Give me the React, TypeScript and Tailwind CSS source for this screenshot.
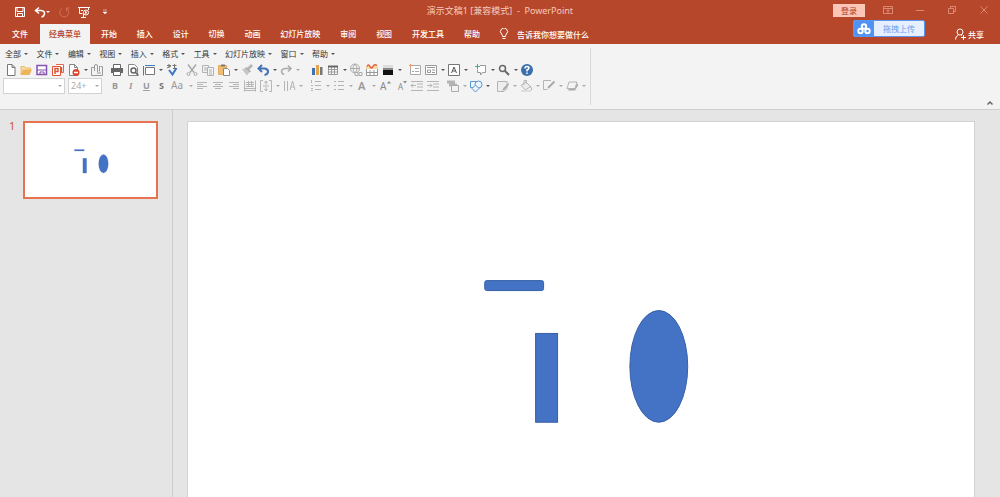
import type { ReactNode } from "react";

const tabs = ["文件", "经典菜单", "开始", "插入", "设计", "切换", "动画", "幻灯片放映", "审阅", "视图", "开发工具", "帮助"];

const menus = ["全部", "文件", "编辑", "视图", "插入", "格式", "工具", "幻灯片放映", "窗口", "帮助"];

type Tool = { name: string; icon?: ReactNode; menu?: boolean; muted?: boolean };

const page = <path d="M5.500 2.500h4.500l3 3v8h-7.500zM10 2.500v3h3" fill="#fff" stroke="#777" />;
const gap: Tool = { name: "" };

const mainTools: Tool[] = [
  { name: "新建", icon: page },
  {
    name: "打开",
    icon: (
      <>
        <path d="M3 12.500v-8h3.500l1 1.500h5v2" fill="#f8dca6" stroke="#e9ba6c" />
        <path d="M2.500 13l2.500-5.500h9l-2.500 5.500z" fill="#edb45c" />
      </>
    ),
  },
  {
    name: "保存",
    icon: (
      <>
        <path d="M3 3.500h9.500v9h-9.500z" fill="#fff" stroke="#8650b0" strokeWidth="1.500" />
        <path d="M3 7.500h9.500v1h-9.500z" fill="#8650b0" />
        <path d="M6 13v-3h4v3" fill="none" stroke="#8650b0" />
      </>
    ),
  },
  {
    name: "关闭演示文稿",
    icon: (
      <>
        <path d="M6 2.500h7.500v8h-7.500" fill="#fff" stroke="#dc6a4d" />
        <path d="M2.500 4.500h8v9h-8z" fill="#fff" stroke="#dc5637" />
        <path d="M5 12v-5.500h3v3h-3M11.500 5v5" fill="none" stroke="#dc5637" strokeWidth="1.500" />
      </>
    ),
  },
  {
    name: "权限",
    menu: true,
    icon: (
      <>
        <path d="M3.500 2.500h5l3 3v8h-8zM8.500 2.500v3h3" fill="#fff" stroke="#888" />
        <circle cx="10" cy="10.500" r="3.500" fill="#d9482b" />
        <path d="M8 10.500h4" stroke="#fff" strokeWidth="1.500" />
      </>
    ),
  },
  {
    name: "附件",
    icon: (
      <>
        <path d="M5 5.500h-2.500v8h11v-9h-2" fill="none" stroke="#999" />
        <path d="M5.500 9v-5q0-1.500 1.500-1.500t1.500 1.500v6M10.500 4v5.500M8 11h4" fill="none" stroke="#999" />
      </>
    ),
  },
  gap,
  {
    name: "打印",
    icon: (
      <>
        <path d="M4.500 6v-3.500h7v3.500" fill="#fff" stroke="#666" />
        <path d="M2 6h12v5h-12z" fill="#666" />
        <path d="M4.500 9.500h7v4h-7z" fill="#fff" stroke="#666" />
      </>
    ),
  },
  {
    name: "打印预览",
    icon: (
      <>
        <path d="M3.500 2.500h6l3 3v8h-9z" fill="#fff" stroke="#888" />
        <circle cx="8.500" cy="8.500" r="2.500" fill="none" stroke="#666" strokeWidth="1.500" />
        <path d="M10.500 10.500l3 3" stroke="#666" strokeWidth="1.500" />
      </>
    ),
  },
  {
    name: "幻灯片大小",
    menu: true,
    icon: (
      <>
        <path d="M4.500 5.500h9v7h-9z" fill="#fff" stroke="#777" />
        <path d="M4 3.500h10M2.500 4v9.500" stroke="#3c7fc4" />
      </>
    ),
  },
  {
    name: "拼写检查",
    icon: (
      <>
        <path d="M3 3.500h4M5 2v4M3 6l4-2M8.500 3.500h4M10.500 2v4M9 6.500h3" fill="none" stroke="#777" />
        <path d="M5 8l3.500 4.500 4-6.500" fill="none" stroke="#3c74c4" strokeWidth="2" />
      </>
    ),
  },
  gap,
  {
    name: "剪切",
    icon: (
      <g fill="none" stroke="#aaa">
        <path d="M4 2.500l6 8M12 2.500l-6 8" strokeWidth="1.500" />
        <circle cx="4.500" cy="12" r="1.500" />
        <circle cx="11.500" cy="12" r="1.500" />
      </g>
    ),
  },
  {
    name: "复制",
    icon: (
      <g fill="#f3f3f3" stroke="#b2b2b2">
        <path d="M2.500 3.500h6v7h-6zM4 6h3M4 8h3" />
        <path d="M7.500 5.500h6v8h-6zM9 8h3M9 10h3M9 12h3" />
      </g>
    ),
  },
  {
    name: "粘贴",
    menu: true,
    icon: (
      <>
        <path d="M2.500 3.500h8v9h-8z" fill="#efbd72" stroke="#e3ac5c" />
        <path d="M5 2.500h4v2h-4z" fill="#777" />
        <path d="M7.500 6.500h4l2 2v5h-6z" fill="#fff" stroke="#888" />
      </>
    ),
  },
  {
    name: "格式刷",
    icon: (
      <>
        <path d="M12 2l2 2-4 4-2-2z" fill="#b5b5b5" />
        <path d="M3 7.500l4-2 4 4-3 4z" fill="#c6c6c6" />
        <path d="M7 5.500l4.500 4.500" stroke="#aaa" strokeWidth="1.500" />
      </>
    ),
  },
  { name: "撤消", menu: true, icon: <path d="M7 3L3.500 6.500l3.500 3.500M4 6.500h6q3.500 1 3 3.500t-3.500 3" fill="none" stroke="#4472b8" strokeWidth="2" /> },
  { name: "恢复", menu: true, muted: true, icon: <path d="M10 3.500l3 3-3 3M12.500 6.500h-6q-3 1-3 3t2.500 3" fill="none" stroke="#aaa" strokeWidth="1.500" /> },
  gap,
  gap,
  {
    name: "图表",
    icon: (
      <>
        <path d="M3 6h3v7h-3z" fill="#3f74b0" />
        <path d="M7 3h3v10h-3z" fill="#e7a54b" />
        <path d="M11 5h2.500v8h-2.500z" fill="#777" />
      </>
    ),
  },
  {
    name: "表格",
    menu: true,
    icon: (
      <>
        <path d="M3.500 4.500h9v8h-9zM6.500 4v9M9.500 4v9M3 7.500h9M3 10h9" fill="#fff" stroke="#999" />
        <path d="M3 3.500h10v2h-10z" fill="#666" />
      </>
    ),
  },
  {
    name: "超链接",
    icon: (
      <g fill="none" stroke="#aaa">
        <circle cx="7" cy="6.500" r="4.500" />
        <path d="M2.500 6.500h9M7 2q-4 4.500 0 9q4-4.500 0-9" />
        <path d="M7 10.500h3v3h-3zM11 10.500h3v3h-3z" fill="#f3f3f3" />
      </g>
    ),
  },
  {
    name: "日期",
    icon: (
      <>
        <path d="M2.500 4.500h11v9h-11zM6 8v5M10 8v5M3 10.500h10" fill="#fff" stroke="#999" />
        <path d="M2 4h12v3h-12z" fill="#f4d9a8" />
        <path d="M3 4.500q1.500-3 3 0t3 0 4-1" fill="none" stroke="#e0603f" strokeWidth="1.500" />
      </>
    ),
  },
  {
    name: "颜色",
    menu: true,
    icon: (
      <>
        <path d="M3 3h10v3h-10z" fill="#ddd" />
        <path d="M3 6h10v2h-10z" fill="#888" />
        <path d="M3 8h10v5h-10z" fill="#111" />
      </>
    ),
  },
  gap,
  {
    name: "新建幻灯片",
    icon: (
      <>
        <path d="M3.500 3.500h10v9h-10zM8 6.500h4M8 9.500h4M5 9.500h2" fill="#fff" stroke="#aaa" />
        <path d="M3.500 2v4M2 3.500h4" stroke="#e9986c" />
      </>
    ),
  },
  { name: "版式", menu: true, icon: <path d="M2.500 3.500h11v9h-11zM4 5.500h8M4.500 8h3v2.500h-3zM9 8h3M9 10.500h3" fill="#fff" stroke="#999" /> },
  {
    name: "文本框",
    menu: true,
    icon: (
      <>
        <path d="M2.500 2.500h11v11h-11z" fill="#fff" stroke="#777" />
        <path d="M5.500 11l2.500-6 2.500 6M6.500 9h3" fill="none" stroke="#555" />
      </>
    ),
  },
  gap,
  {
    name: "批注",
    menu: true,
    icon: (
      <>
        <path d="M7 3.500h5.500v7h-3l-2 2.500v-2.500h-3v-3" fill="#fff" stroke="#999" />
        <path d="M4.500 2v5M2 4.500h5" stroke="#55a878" />
      </>
    ),
  },
  {
    name: "查找",
    menu: true,
    icon: (
      <g fill="none" stroke="#666">
        <circle cx="6.500" cy="6.500" r="3" strokeWidth="1.500" />
        <path d="M9 9l4 4" strokeWidth="2" />
      </g>
    ),
  },
  {
    name: "帮助",
    icon: (
      <>
        <circle cx="8" cy="8" r="6" fill="#3a6faa" />
        <path d="M6 6.500q0-2 2-2t2 1.500q0 1-2 2v1.500M8 10.500v1.500" fill="none" stroke="#fff" strokeWidth="1.500" />
      </>
    ),
  },
];

const lines = (d: string) => <path d={d} fill="none" stroke="#b5b5b5" />;

const formatTools: Tool[] = [
  { name: "加粗", icon: <text x="5" y="11" fontSize="9" fontWeight="700" fill="#999">B</text> },
  { name: "倾斜", icon: <text x="6" y="11" fontSize="9" fontStyle="italic" fontWeight="700" fontFamily="Liberation Serif" fill="#999">I</text> },
  { name: "下划线", icon: <text x="4" y="11" fontSize="9" fontWeight="700" textDecoration="underline" fill="#999">U</text> },
  { name: "阴影", icon: <text x="4" y="11" fontSize="9" fontWeight="700" fill="#777">S</text> },
  { name: "更改大小写", menu: true, muted: true, icon: <text x="0" y="11" fontSize="10" fill="#999">Aa</text> },
  { name: "左对齐", icon: lines("M3 4.500h10M3 6.500h6M3 8.500h10M3 10.500h6") },
  { name: "居中", icon: lines("M3 4.500h10M5 6.500h6M3 8.500h10M5 10.500h6") },
  { name: "右对齐", icon: lines("M3 4.500h10M7 6.500h6M3 8.500h10M7 10.500h6") },
  { name: "分散对齐", icon: lines("M2.500 2.500v11M13.500 2.500v11M4 4.500h8M4 6.500h8M4 8.500h8M3 12.500h10M3 10.500h10M6.500 3v6M9.500 3v6") },
  { name: "对齐文本", menu: true, muted: true, icon: lines("M5 2.500h-2.500v11h2.500M11 2.500h2.500v11h-2.500M8 3v4M8 9v4M6.500 5l1.500-2 1.500 2M6.500 11l1.500 2 1.500-2M5 8h6") },
  { name: "文字方向", menu: true, muted: true, icon: lines("M3.500 3v10M6.500 3v10M9 12l2.500-9 2.500 9M10 9h3") },
  gap,
  { name: "编号", menu: true, muted: true, icon: lines("M7 3.500h6M7 7.500h6M7 11.500h6M3.500 2v3M3 7.500h2M3 10.500h2M3 12.500h2") },
  { name: "项目符号", menu: true, muted: true, icon: lines("M7 3.500h6M7 7.500h6M7 11.500h6M3 3.500h2M3 7.500h2M3 11.500h2") },
  { name: "字体颜色", menu: true, muted: true, icon: <text x="4" y="12" fontSize="11" fontWeight="600" fill="#999">A</text> },
  {
    name: "增大字号",
    icon: (
      <>
        <text x="3" y="12" fontSize="10" fill="#888">A</text>
        <path d="M10 5.500l2-2.500 2 2.500z" fill="#888" />
      </>
    ),
  },
  {
    name: "减小字号",
    icon: (
      <>
        <text x="5" y="12" fontSize="8" fill="#888">A</text>
        <path d="M10 3l2 2.500 2-2.500z" fill="#888" />
      </>
    ),
  },
  { name: "减少缩进", icon: lines("M2 3.500h12M8 6h6M8 9h6M2 12.500h12M7 7.500h-5M4 5.500l-2 2 2 2") },
  { name: "增加缩进", icon: lines("M2 3.500h12M8 6h6M8 9h6M2 12.500h12M2 7.500h5M5 5.500l2 2-2 2") },
  gap,
  {
    name: "排列",
    menu: true,
    muted: true,
    icon: (
      <>
        <path d="M2 2.500h8v3h-8zM4 5.500h8v3h-8z" fill="#b5b5b5" />
        <path d="M6.500 7.500h7v6h-7z" fill="#f3f3f3" stroke="#aaa" />
      </>
    ),
  },
  {
    name: "形状",
    menu: true,
    icon: (
      <g fill="#eef5fc" stroke="#5a96cc">
        <path d="M2.500 3.500h7v6h-7z" />
        <circle cx="10.500" cy="6.500" r="3.500" />
        <path d="M7.500 7l3.500 3.500-3.500 3.500-3.500-3.500z" />
      </g>
    ),
  },
  gap,
  {
    name: "快速样式",
    menu: true,
    muted: true,
    icon: (
      <>
        <path d="M2.500 3.500h9.500v7l-3 3h-6.500z" fill="#eee" stroke="#b5b5b5" />
        <path d="M13.500 5l-5 5-1.500 3 3-1.500 4-5z" fill="#aaa" />
      </>
    ),
  },
  {
    name: "形状填充",
    menu: true,
    muted: true,
    icon: (
      <>
        <path d="M3 7.500l5-3.500 4.500 4.500-5 3.500zM6 7v-4.500h2.500v3" fill="#ececec" stroke="#b5b5b5" />
        <path d="M12 8q3 3 1 4.500" stroke="#aaa" fill="none" />
        <path d="M3 13h10" stroke="#ddd" strokeWidth="2" />
      </>
    ),
  },
  {
    name: "形状轮廓",
    menu: true,
    muted: true,
    icon: (
      <>
        <path d="M10 2.500h-7.500v9h4" fill="none" stroke="#b5b5b5" />
        <path d="M13.500 3.500l-6.500 6.500" stroke="#aaa" strokeWidth="2" />
      </>
    ),
  },
  {
    name: "形状效果",
    menu: true,
    muted: true,
    icon: (
      <>
        <path d="M4 12.500h7l3-5v-2l-9 5z" fill="#aaa" />
        <path d="M5 4h8l-2 6.500h-8z" fill="#f3f3f3" stroke="#b5b5b5" />
      </>
    ),
  },
];

function Caret({ muted }: { muted?: boolean }) {
  return (
    <svg viewBox="0 0 4 2" className={muted ? "h-[2px] w-1 text-[#aaa]" : "h-[2px] w-1 text-[#555]"}>
      <path d="M0 0h4l-2 2z" fill="currentColor" />
    </svg>
  );
}

function ToolRow({ tools }: { tools: Tool[] }) {
  return (
    <>
      {tools.map((tool, i) =>
        tool.icon ? (
          <button
            key={i}
            type="button"
            aria-label={tool.name}
            className={tool.menu ? "flex h-4 w-[23px] shrink-0 items-center gap-[2px]" : "flex h-4 w-4 shrink-0 items-center"}
          >
            <svg viewBox="0 0 16 16" className="h-4 w-4 shrink-0">
              {tool.icon}
            </svg>
            {tool.menu && <Caret muted={tool.muted} />}
          </button>
        ) : (
          <span key={i} className="w-1 shrink-0" />
        )
      )}
    </>
  );
}

function SlideArt() {
  return (
    <svg viewBox="0 0 788 443" className="block w-full" role="img" aria-label="幻灯片 1">
      <g fill="#4472c4" stroke="#3560a8">
        <rect x="297.500" y="159" width="59" height="10" rx="2" />
        <rect x="348.500" y="212" width="22" height="89" />
        <ellipse cx="472" cy="245" rx="29" ry="56" />
      </g>
    </svg>
  );
}

function TitleBar() {
  return (
    <div className="grid h-6 grid-cols-3 text-white">
      <div className="flex items-center gap-2 pl-[14px]">
        <button type="button" aria-label="保存">
          <svg viewBox="0 0 12 12" className="h-3 w-3" fill="none" stroke="currentColor">
            <path d="M1.500 1.500h9v9h-9zM3 2v3.500h6v-3.500M3.500 10.500v-3h5v3" />
          </svg>
        </button>
        <button type="button" aria-label="撤消" className="flex items-center">
          <svg viewBox="0 0 12 12" className="h-3 w-3" fill="none" stroke="currentColor" strokeWidth="1.500">
            <path d="M5 1.500l-3.500 3 3.500 3M2 4.500h5q4 .500 3.500 3.500-.500 2.500-3 3" />
          </svg>
          <svg viewBox="0 0 4 2" className="h-[2px] w-1">
            <path d="M0 0h4l-2 2z" fill="currentColor" />
          </svg>
        </button>
        <button type="button" aria-label="重复" className="text-[#d0705a]">
          <svg viewBox="0 0 12 12" className="h-3 w-3" fill="none" stroke="currentColor">
            <path d="M4 2.500a4.500 4.500 0 1 0 4.500 0M8.500 5v-3h3" />
          </svg>
        </button>
        <button type="button" aria-label="从头开始放映">
          <svg viewBox="0 0 12 12" className="h-3 w-3" fill="none" stroke="currentColor">
            <path d="M0 1.500h12M1.500 2v5.500h3M10.500 2v2M3 11.500h5M5.500 8v3M3 4.500h2" />
            <circle cx="8" cy="6.500" r="2.500" />
            <path d="M7.500 5.500l1.500 1-1.500 1z" />
          </svg>
        </button>
        <button type="button" aria-label="自定义快速访问工具栏" className="pl-1">
          <svg viewBox="0 0 6 6" className="h-[6px] w-[6px]">
            <path d="M1 1h4M1 3h4l-2 2z" fill="currentColor" stroke="currentColor" strokeWidth="0.500" />
          </svg>
        </button>
      </div>
      <h1 className="pt-[5px] text-center text-[9px] leading-3 whitespace-nowrap text-[#f4cabe]">演示文稿1 [兼容模式]&nbsp; - &nbsp;PowerPoint</h1>
      <div className="flex items-start justify-end gap-[17px] pt-1 pr-[10px] text-[#dc8a76]">
        <button type="button" className="h-[13px] w-8 bg-[#fbc6b7] text-[8px] leading-3 text-[#a83c20]">
          登录
        </button>
        <div className="flex gap-5">
          {[
            { name: "功能区显示选项", d: "M1.500 2.500h9v7h-9zM1.500 4.500h9M6 9v-3M4.500 7l1.500-1.500 1.500 1.500" },
            { name: "最小化", d: "M2 6.500h8" },
            { name: "还原", d: "M2.500 4.500h5v5h-5zM4.500 4.500v-2h5v5h-2" },
            { name: "关闭", d: "M2.500 2.500l7 7M9.500 2.500l-7 7" },
          ].map((item) => (
            <button key={item.name} type="button" aria-label={item.name}>
              <svg viewBox="0 0 12 12" className="h-3 w-3" fill="none" stroke="currentColor">
                <path d={item.d} />
              </svg>
            </button>
          ))}
        </div>
      </div>
    </div>
  );
}

function TabBar() {
  return (
    <div className="flex h-5 items-stretch pl-[3px] text-[8px] leading-[19px] font-medium text-white">
      <a href="#" className="mr-[4px] pl-[9px]">
        {tabs[0]}
      </a>
      <nav className="ml-[8px] flex w-[449px] shrink-0 justify-between">
        {tabs.slice(1).map((tab) => (
          <a key={tab} href="#" className={tab === "经典菜单" ? "bg-[#f3f3f3] px-[9px] text-[#b7472a]" : "px-[9px]"}>
            {tab}
          </a>
        ))}
      </nav>
      <button type="button" className="flex items-center gap-2 pl-[10px]">
        <svg viewBox="0 0 10 12" className="h-3 w-[10px]" fill="none" stroke="currentColor">
          <path d="M3.500 8.500q0-1.500-1-2.500a3.500 3.500 0 1 1 5 0q-1 1-1 2.500zM3.500 10.500h3" />
        </svg>
        告诉我你想要做什么
      </button>
      <button type="button" className="mr-4 ml-auto flex items-center">
        <svg viewBox="0 0 12 12" className="h-3 w-3" fill="none" stroke="currentColor">
          <circle cx="6" cy="4" r="3" />
          <path d="M1.500 11.500q0-3.500 3-4.500M7 7l1 .500M9.500 7v5M7 9.500h5" />
        </svg>
        <span className="pl-[2px]">共享</span>
      </button>
    </div>
  );
}

function UploadBadge() {
  return (
    <button type="button" className="absolute top-[20px] right-[75px] flex h-[17px] w-[72px] overflow-hidden rounded-[2px] border border-[#5b97ee] bg-[#e6effd]">
      <span className="flex h-full w-5 items-center justify-center bg-[#4f93f5]">
        <svg viewBox="0 0 14 12" className="h-3 w-[14px]" fill="none" stroke="#fff" strokeWidth="2">
          <circle cx="7" cy="3.500" r="2.200" />
          <circle cx="3.500" cy="8" r="2.200" />
          <circle cx="10.500" cy="8" r="2.200" />
        </svg>
      </span>
      <span className="flex-1 text-center text-[8px] leading-[15px] text-[#6ba0ee]">拖拽上传</span>
    </button>
  );
}

function Ribbon() {
  return (
    <div className="flex h-[66px] shrink-0 border-b border-[#cfcfcf] bg-[#f3f3f3]">
      <div className="my-1 w-[591px] shrink-0 border-r border-[#d8d8d8]">
        <div className="flex h-[14px] w-[335px] items-start justify-between pl-[5px] text-[8px] leading-3 text-[#333]">
          {menus.map((menu) => (
            <button key={menu} type="button" className="flex items-center gap-[3px]">
              {menu}
              <Caret />
            </button>
          ))}
        </div>
        <div className="flex h-4 pl-[2px]">
          <ToolRow tools={mainTools} />
        </div>
        <div className="flex h-4 items-center pl-[3px]">
          <label className="relative mr-[3px] flex h-4 w-[62px] shrink-0 items-center justify-end border border-[#d2d2d2] bg-white pr-[2px]">
            <select aria-label="字体" className="absolute inset-0 appearance-none text-[8px]" />
            <Caret muted />
          </label>
          <label className="relative mr-[5px] flex h-4 w-[34px] shrink-0 items-center justify-end border border-[#d2d2d2] bg-white pr-[2px]">
            <select aria-label="字号" className="absolute inset-0 appearance-none pl-[2px] text-[9px] text-[#aaa]">
              <option>24+</option>
            </select>
            <Caret muted />
          </label>
          <ToolRow tools={formatTools} />
        </div>
      </div>
      <button type="button" aria-label="折叠功能区" className="mr-[6px] mb-[2px] ml-auto self-end">
        <svg viewBox="0 0 8 8" className="h-2 w-2" fill="none" stroke="#666" strokeWidth="1.500">
          <path d="M1.500 5.500l2.500-2.500 2.500 2.500" />
        </svg>
      </button>
    </div>
  );
}

export default function App() {
  return (
    <div className="relative flex h-screen flex-col overflow-hidden bg-[#e5e5e5] font-['Noto_Sans','Noto_Sans_CJK_SC',sans-serif]">
      <header className="shrink-0 bg-[#b7472a]">
        <TitleBar />
        <TabBar />
        <UploadBadge />
      </header>
      <Ribbon />
      <main className="flex min-h-0 flex-1">
        <aside className="flex w-[173px] shrink-0 items-start border-r border-[#cdcdcd] pt-[11px] pl-[9px]">
          <span className="w-[14px] text-[11px] leading-[10px] text-[#cf5233]">1</span>
          <a href="#" className="block w-[135px] border-2 border-[#e8714f] bg-white">
            <SlideArt />
          </a>
        </aside>
        <section className="min-w-0 flex-1 overflow-hidden pt-[11px] pr-[25px] pl-[14px]">
          <div className="border border-[#d2d2d2] bg-white">
            <SlideArt />
          </div>
        </section>
      </main>
    </div>
  );
}
